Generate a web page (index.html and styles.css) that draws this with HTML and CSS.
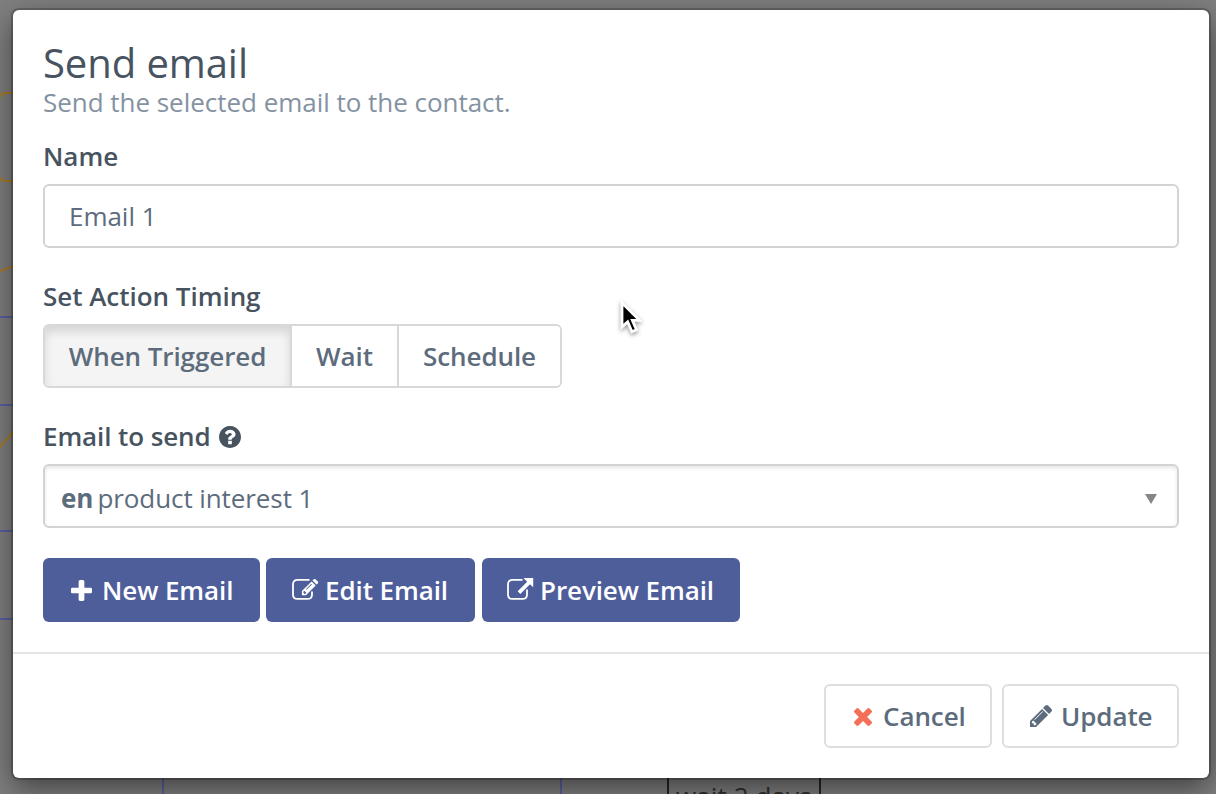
FILE: index.html
```html
<!DOCTYPE html>
<html lang="en">
<head>
<meta charset="utf-8">
<title>Send email</title>
<link rel="stylesheet" href="styles.css">
</head>
<body>
<svg class="canvas" viewBox="0 0 1216 794" aria-hidden="true">
  <g fill="none" stroke-width="2">
    <path class="wire-gold" d="M14 93H6Q-1 93 -1 100V174Q-1 181 6 181H14M0 271L14 266M0 447L14 431"/>
    <path class="wire-blue" d="M0 317H14M0 405H14M0 531H14M0 619H14M163 770V794M561 770V794"/>
    <path class="wire-dark" d="M668 770V794M820 770V794"/>
  </g>
</svg>
<span class="canvas-label">wait 2 days</span>
<div class="modal" role="dialog">
  <div class="modal-body">
    <h1 class="title">Send email</h1>
    <p class="subtitle">Send the selected email to the contact.</p>
    <label class="label label-name" for="name">Name</label>
    <input class="input" id="name" type="text" value="Email 1">
    <div class="label label-timing">Set Action Timing</div>
    <div class="btn-group">
      <button class="segment active">When Triggered</button>
      <button class="segment">Wait</button>
      <button class="segment">Schedule</button>
    </div>
    <div class="label label-email">Email to send
      <svg class="icon-help" viewBox="128 128 1536 1536"><path d="M1024 1376v-192q0-14-9-23t-23-9h-192q-14 0-23 9t-9 23v192q0 14 9 23t23 9h192q14 0 23-9t9-23zm256-672q0-88-55.500-163t-138.500-116-170-41q-243 0-371 213-15 24 8 42l132 100q7 6 19 6 16 0 25-12 53-68 86-92 34-24 86-24 48 0 85.500 26t37.500 59q0 38-20 61t-68 45q-63 28-115.500 86.500t-52.500 125.500v36q0 14 9 23t23 9h192q14 0 23-9t9-23q0-19 21.500-49.500t54.500-49.500q32-18 49-28.500t46-35 44.500-48 28-60.500 12.500-81zm384 192q0 209-103 385.500t-279.500 279.500-385.500 103-385.500-103-279.500-279.500-103-385.500 103-385.500 279.500-279.500 385.500-103 385.500 103 279.500 279.500 103 385.500z"/></svg>
    </div>
    <div class="select"><b>en</b><span class="select-text">product interest 1</span><svg class="caret" viewBox="0 0 12 10"><path d="M0 0H12L6 10Z"/></svg></div>
    <div class="actions">
      <button class="btn primary btn-new">
        <svg class="icon-plus" viewBox="192 128 1408 1408"><path d="M1600 736v192q0 40-28 68t-68 28h-416v416q0 40-28 68t-68 28h-192q-40 0-68-28t-28-68v-416h-416q-40 0-68-28t-28-68v-192q0-40 28-68t68-28h416v-416q0-40 28-68t68-28h192q40 0 68 28t28 68v416h416q40 0 68 28t28 68z"/></svg>
        New Email</button>
      <button class="btn primary btn-edit">
        <svg class="icon-edit" viewBox="0 0 27 24"><path class="outline" d="M17.500 2.900H5.500Q1 2.900 1 7.400V17.400Q1 21.900 5.500 21.900H15.500Q20 21.900 20 17.400V14.500"/><path fill-rule="evenodd" d="M19.600 4.400L23.700 8.500L14 18.200H9.900V14.100ZM11.200 14.900V15.800H12.200V16.900H13.200L14.300 15.800L12.300 13.800ZM19.300 6.800L13.900 12.200L14.500 12.800L19.900 7.400Z"/><path d="M20.500 3.500L21.700 2.300Q22.600 1.500 23.500 2.300L25.800 4.600Q26.600 5.500 25.800 6.400L24.600 7.600Z"/></svg>
        Edit Email</button>
      <button class="btn primary btn-preview">
        <svg class="icon-open" viewBox="0 0 27 24"><path class="outline" d="M15.500 2.900H5.500Q1 2.900 1 7.400V17.400Q1 21.900 5.500 21.900H15.500Q20 21.900 20 17.400V12.500"/><path d="M16.500 1H26.200V10.300L23 7.300L13.300 16.900L10.700 14.300L20.200 4.700Z"/></svg>
        Preview Email</button>
    </div>
  </div>
  <div class="modal-footer">
    <button class="btn plain btn-cancel">
      <svg class="icon-times" viewBox="302 366 1188 1188"><path d="M1490 1322q0 40-28 68l-136 136q-28 28-68 28t-68-28l-294-294-294 294q-28 28-68 28t-68-28l-136-136q-28-28-28-68t28-68l294-294-294-294q-28-28-28-68t28-68l136-136q28-28 68-28t68 28l294 294 294-294q28-28 68-28t68 28l136 136q28 28 28 68t-28 68l-294 294 294 294q28 28 28 68z"/></svg>
      Cancel</button>
    <button class="btn plain btn-update">
      <svg class="icon-pencil" viewBox="128 149 1515 1515"><path d="M491 1536l91-91-235-235-91 91v107h128v128h107zm523-928q0-22-22-22-10 0-17 7l-542 542q-7 7-7 17 0 22 22 22 10 0 17-7l542-542q7-7 7-17zm-54-192l416 416-832 832h-416v-416zm683 96q0 53-37 90l-166 166-416-416 166-165q36-38 90-38 53 0 91 38l235 234q37 39 37 91z"/></svg>
      Update</button>
  </div>
</div>
<svg class="cursor" viewBox="0 0 24 38"><path d="M3 3V28.500L9 23L13.500 33.500L18.300 31.400L14 21.500H21.500Z"/></svg>
</body>
</html>
```
FILE: styles.css
```css
* { box-sizing: border-box; }
body {
  margin: 0;
  width: 1216px;
  height: 794px;
  padding: 10px 7px 16px 13px;
  overflow: hidden;
  position: relative;
  background: #7f7f7f;
  font: 26px/36px "Open Sans", "Noto Sans", sans-serif;
  letter-spacing: -0.03px;
  color: #5d6c7c;
}
.canvas { position: absolute; left: 0; top: 0; width: 1216px; height: 794px; }
.wire-gold { stroke: #a87a22; }
.wire-blue { stroke: #5a60a0; }
.wire-dark { stroke: #23262b; }
.canvas-label { position: absolute; left: 676px; top: 778px; color: #303030; line-height: 36px; white-space: nowrap; letter-spacing: 0.1px; }
.modal {
  position: relative;
  height: 768px;
  background: #fff;
  border-radius: 6px;
  box-shadow: 0 0 0 2px rgba(0,0,0,.2), 0 10px 30px rgba(0,0,0,.5);
}
.modal-body { height: 644px; padding: 30px 30px 0; border-bottom: 2px solid #e4e4e4; }
.title { margin: 0; font-size: 40px; line-height: 46px; font-weight: 400; letter-spacing: -0.08px; color: #47535f; }
.subtitle { margin: -1px 0 0; color: #8492a2; line-height: 34px; }
.label { display: flex; align-items: center; height: 36px; font-weight: 600; color: #47535f; }
.label-name { margin-top: 19px; }
.label-timing, .label-email { margin-top: 30px; }
.input {
  display: block; width: 100%; height: 64px; margin-top: 10px; padding: 0 24px;
  border: 2px solid #d3d3d3; border-radius: 6px; background: #fff; font: inherit; letter-spacing: inherit; color: inherit; outline: none;
}
.btn-group { display: flex; width: 519px; height: 64px; margin-top: 10px; border: 2px solid #d8d8d8; border-radius: 6px; overflow: hidden; }
.segment { padding: 0; border: 0; background: #fff; font: inherit; font-weight: 600; letter-spacing: -0.08px; color: inherit; white-space: nowrap; flex: 1; }
.segment + .segment { border-left: 2px solid #d8d8d8; flex: 0 0 107px; }
.segment + .segment:last-child { flex-basis: 163px; }
.segment.active { background: #f4f4f4; box-shadow: inset 0 6px 10px rgba(0,0,0,.125); }
.icon-help { width: 22px; height: 22px; margin: 1px 0 0 8px; fill: #47535f; }
.label-email { letter-spacing: -0.1px; }
.select {
  display: flex; align-items: center; height: 64px; margin-top: 10px; padding: 4px 20px 0 16px;
  border: 2px solid #d3d3d3; border-radius: 6px; box-shadow: inset 0 2px 4px rgba(0,0,0,.1);
}
.select-text { flex: 1; margin-left: 4px; letter-spacing: -0.08px; }
.caret { width: 12px; height: 10px; margin-top: 2px; fill: #858585; }
.actions { display: flex; gap: 6px; margin-top: 30px; }
.btn { display: flex; align-items: center; height: 64px; padding: 0 0 0 26px; border: 0; border-radius: 6px; font: inherit; font-weight: 600; letter-spacing: -0.09px; white-space: nowrap; }
.btn svg { flex: none; fill: currentColor; }
.primary { background: #4e5e9b; color: #fff; }
.btn-new { width: 217px; padding-left: 28px; }
.btn-edit { width: 209px; }
.btn-preview { width: 258px; margin-left: 1px; padding-left: 25px; }
.icon-plus { width: 21px; height: 21px; margin-right: 10px; }
.icon-edit, .icon-open { width: 27px; height: 24px; margin: -3px 6px 0 0; }
.btn .outline { fill: none; stroke: currentColor; stroke-width: 1.8; }
.modal-footer { display: flex; justify-content: flex-end; gap: 10px; padding: 30px 30px 0; }
.plain { background: #fff; border: 2px solid #dedede; color: #5d6c7c; }
.btn-cancel { width: 168px; padding-left: 28px; }
.btn-update { width: 177px; }
.btn .icon-times { width: 18px; height: 18px; margin: 2px 11px 0 0; fill: #f36f58; }
.icon-pencil { width: 22px; height: 22px; margin-right: 9px; }
.cursor { position: absolute; left: 619px; top: 300px; width: 23px; height: 36px; fill: #000; stroke: #fff; stroke-width: 3; filter: drop-shadow(0 2px 2px rgba(0,0,0,.4)); }
```
